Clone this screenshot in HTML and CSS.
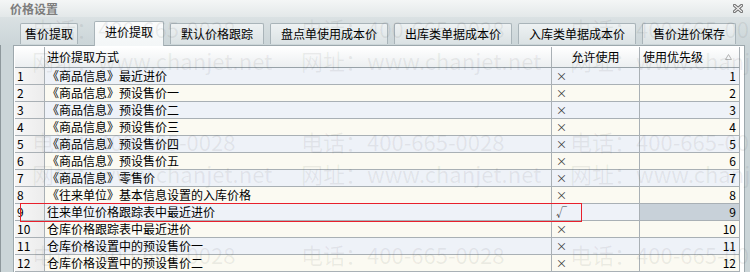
FILE: index.html
```html
<!DOCTYPE html>
<html lang="zh">
<head>
  <meta charset="UTF-8" />
  <title>价格设置</title>
  <link rel="stylesheet" href="styles.css">
</head>
<body>
  <div class="window">
    <div class="titlebar">
      <span class="title">价格设置</span>
      <svg class="close" width="10" height="9" viewBox="0 0 10 9">
        <path d="M1.5 1.5 L8.5 7.5 M8.5 1.5 L1.5 7.5" stroke="#6e6e6e" stroke-width="3.2" stroke-linecap="square" />
        <path d="M1.5 1.5 L8.5 7.5 M8.5 1.5 L1.5 7.5" stroke="#f2f2f2" stroke-width="1.2" stroke-linecap="square" />
      </svg>
    </div>

    <div class="tabs">
      <div class="tab tab-first">售价提取</div>
      <div class="tab active">进价提取</div>
      <div class="tab">默认价格跟踪</div>
      <div class="tab">盘点单使用成本价</div>
      <div class="tab">出库类单据成本价</div>
      <div class="tab">入库类单据成本价</div>
      <div class="tab">售价进价保存</div>
    </div>

    <div class="panel">
      <div class="grid">
        <div class="row head">
          <div class="cell num"></div>
          <div class="cell name">进价提取方式</div>
          <div class="cell allow">允许使用</div>
          <div class="cell prio">使用优先级
            <svg class="sort" width="7" height="6" viewBox="0 0 7 6"><polygon points="3.5,0.5 6.5,5.5 0.5,5.5" fill="none" stroke="#b4b4b4" /></svg>
          </div>
        </div>
        <div class="row"><div class="cell num">1</div><div class="cell name">《商品信息》最近进价</div><div class="cell allow">×</div><div class="cell prio">1</div></div>
        <div class="row"><div class="cell num">2</div><div class="cell name">《商品信息》预设售价一</div><div class="cell allow">×</div><div class="cell prio">2</div></div>
        <div class="row"><div class="cell num">3</div><div class="cell name">《商品信息》预设售价二</div><div class="cell allow">×</div><div class="cell prio">3</div></div>
        <div class="row"><div class="cell num">4</div><div class="cell name">《商品信息》预设售价三</div><div class="cell allow">×</div><div class="cell prio">4</div></div>
        <div class="row"><div class="cell num">5</div><div class="cell name">《商品信息》预设售价四</div><div class="cell allow">×</div><div class="cell prio">5</div></div>
        <div class="row"><div class="cell num">6</div><div class="cell name">《商品信息》预设售价五</div><div class="cell allow">×</div><div class="cell prio">6</div></div>
        <div class="row"><div class="cell num">7</div><div class="cell name">《商品信息》零售价</div><div class="cell allow">×</div><div class="cell prio">7</div></div>
        <div class="row"><div class="cell num">8</div><div class="cell name">《往来单位》基本信息设置的入库价格</div><div class="cell allow">×</div><div class="cell prio">8</div></div>
        <div class="row selected"><div class="cell num">9</div><div class="cell name">往来单位价格跟踪表中最近进价</div><div class="cell allow">√</div><div class="cell prio">9</div></div>
        <div class="row"><div class="cell num">10</div><div class="cell name">仓库价格跟踪表中最近进价</div><div class="cell allow">×</div><div class="cell prio">10</div></div>
        <div class="row"><div class="cell num">11</div><div class="cell name">仓库价格设置中的预设售价一</div><div class="cell allow">×</div><div class="cell prio">11</div></div>
        <div class="row"><div class="cell num">12</div><div class="cell name">仓库价格设置中的预设售价二</div><div class="cell allow">×</div><div class="cell prio">12</div></div>
      </div>
    </div>

    <!-- annotation box drawn over row 9 -->
    <div class="marker"></div>

    <div class="watermark">
      <div class="wm"><span>电话：400-665-0028</span><span>网址：www.chanjet.net</span></div>
      <div class="wm"><span>电话：400-665-0028</span><span>网址：www.chanjet.net</span></div>
      <div class="wm"><span>电话：400-665-0028</span><span>网址：www.chanjet.net</span></div>
      <div class="wm"><span>电话：400-665-0028</span><span>网址：www.chanjet.net</span></div>
      <div class="wm"><span>电话：400-665-0028</span><span>网址：www.chanjet.net</span></div>
      <div class="wm"><span>电话：400-665-0028</span><span>网址：www.chanjet.net</span></div>
      <div class="wm"><span>电话：400-665-0028</span><span>网址：www.chanjet.net</span></div>
      <div class="wm"><span>电话：400-665-0028</span><span>网址：www.chanjet.net</span></div>
      <div class="wm"><span>电话：400-665-0028</span><span>网址：www.chanjet.net</span></div>
    </div>
  </div>
</body>
</html>
```

FILE: styles.css
```css
/* --- Page --- */
html, body {
  margin: 0;
  height: 100%;
}
body {
  width: 750px;
  height: 272px;
  overflow: hidden;
  font-family: "Noto Sans CJK SC", "Liberation Sans", sans-serif;
  font-size: 12px;
  color: #000;
  background: #cbd5d8;
}
.window {
  position: relative;
  height: 100%;
  box-shadow: inset 1px 0 #8e989c;
}

/* --- Title bar --- */
.titlebar {
  height: 17px;
  display: flex;
  align-items: center;
  padding-left: 10px;
  background: linear-gradient(#f4f6f6, #e3e8e9);
}
.title {
  font-weight: bold;
  color: #7d7d7d;
  line-height: 17px;
}
.close {
  margin-left: auto;
  margin-right: 7px;
}

/* --- Tabs --- */
.tabs {
  height: 28px;
  box-sizing: border-box;
  display: flex;
  align-items: flex-end;
  gap: 6px;
  padding-left: 20px;
  background: linear-gradient(#dae1e3, #cbd5d8);
}
.tab {
  height: 21px;
  box-sizing: border-box;
  padding: 0 10px;
  margin-bottom: 1px;
  border: 1px solid #a9b4b9;
  border-bottom: none;
  border-radius: 2px 2px 0 0;
  background: linear-gradient(#eef2f3, #dbe2e4);
  line-height: 20px;
  white-space: nowrap;
}
.tab-first {
  padding: 0 4px;
  margin-right: 10px;
}
.tab.active {
  height: 25px;
  margin-bottom: -1px;
  position: relative;
  z-index: 1;
  background: linear-gradient(#fbfcfc, #f3f6f7);
  line-height: 20px;
}

/* --- Panel & grid --- */
.panel {
  margin-left: 13px;
  width: 732px;
  height: 240px;
  box-sizing: border-box;
  border: 1px solid #9da8ad;
  padding: 1px;
  background: #fff;
}
.row {
  display: grid;
  grid-template-columns: 30px 507px 88px 100px;
  height: 17px;
}
.row:nth-child(even) .cell { background: #eef2f8; }
.row:nth-child(odd) .cell { background: #fbfaf2; }
.cell {
  box-sizing: border-box;
  border-right: 1px solid #a9b0b5;
  border-bottom: 1px solid #a9b0b5;
  line-height: 16px;
  white-space: nowrap;
  overflow: hidden;
}
.row .cell.num {
  padding-left: 2px;
  background: linear-gradient(to right, #f7f7f7, #ececec);
}
.name { padding-left: 2px; }
.allow {
  padding-left: 4px;
  font-size: 11px;
  color: #3a3a3a;
}
.prio {
  text-align: right;
  padding-right: 3px;
}
.row.selected .cell.prio { background: #c8d1d9; }

.row.head { height: 21px; }
.row.head .cell {
  line-height: 20px;
  background: linear-gradient(#ffffff, #eceff1);
  border-bottom-color: #98a2a8;
}
.row.head .allow {
  text-align: center;
  padding: 0;
  font-size: 12px;
  color: #000;
}
.row.head .prio {
  display: flex;
  align-items: center;
  justify-content: space-between;
  text-align: left;
  padding: 0 7px 0 3px;
}

/* --- Overlays --- */
.marker {
  position: absolute;
  z-index: 3;
  left: 20px;
  top: 203px;
  width: 562px;
  height: 19px;
  box-sizing: border-box;
  border: 1px solid #e8202c;
}
.watermark {
  position: absolute;
  z-index: 2;
  inset: 0;
  pointer-events: none;
  display: grid;
  grid-template-columns: repeat(3, 269px);
  grid-auto-rows: 113px;
  padding: 17px 0 0 32px;
  font-size: 22px;
  line-height: 22px;
  color: rgba(80, 80, 80, 0.09);
  overflow: hidden;
}
.wm {
  display: flex;
  flex-direction: column;
  gap: 10px;
  white-space: nowrap;
}
```
